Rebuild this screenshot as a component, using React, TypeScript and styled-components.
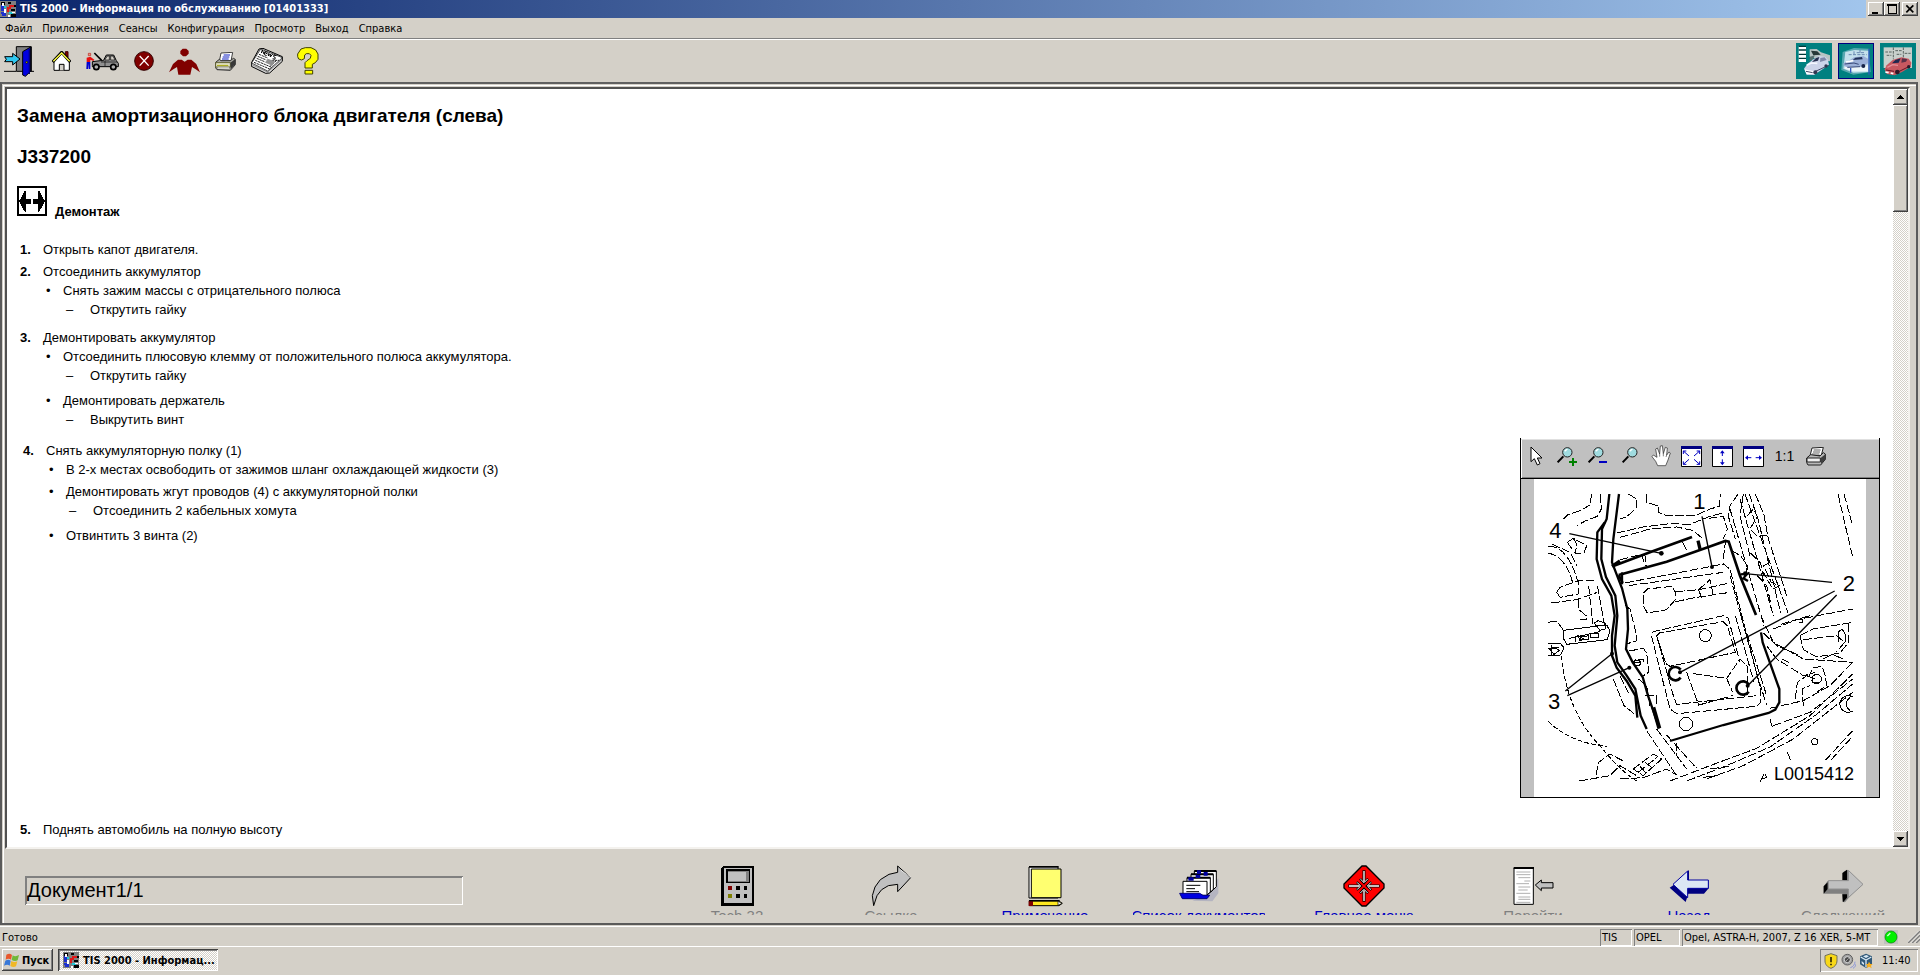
import React from "react";
import styled, { createGlobalStyle, css } from "styled-components";

const face = "#d4d0c8";
const uiFont = `"DejaVu Sans Condensed", "DejaVu Sans", sans-serif`;
const docFont = `"Liberation Sans", Arial, sans-serif`;

const raised = css`
  box-shadow: inset -1px -1px #404040, inset 1px 1px #ffffff, inset -2px -2px #808080;
`;
const sunken = css`
  box-shadow: inset 1px 1px #808080, inset -1px -1px #ffffff;
`;

const GlobalStyle = createGlobalStyle`
  * { box-sizing: border-box; }
  body { margin: 0; background: ${face}; color: #000; font-family: ${uiFont}; font-size: 11px; }
  button { font: inherit; color: inherit; background: none; border: 0; padding: 0; margin: 0; }
  ul, ol { list-style: none; margin: 0; padding: 0; }
  svg { display: block; flex: none; }
`;

const Shell = styled.div`
  display: flex;
  flex-direction: column;
  height: 100vh;
  overflow: hidden;
  background: ${face};
`;

/* ---------- title bar ---------- */
const TitleBar = styled.header`
  display: flex;
  align-items: center;
  height: 18px;
  flex: none;
  background: linear-gradient(90deg, #0a246a, #a6caf0);
`;
const Title = styled.h1`
  flex: 1;
  margin: 0 0 0 4px;
  font-size: 11px;
  line-height: 18px;
  color: #fff;
  white-space: nowrap;
`;
const WindowButtons = styled.div`
  display: flex;
  height: 18px;
  align-items: center;
  padding: 0 2px;
  background: ${face};
`;
const WindowButton = styled.button<{ $gap?: boolean }>`
  width: 16px;
  height: 14px;
  margin-left: ${(p) => (p.$gap ? 2 : 0)}px;
  background: ${face};
  ${raised}
`;

/* ---------- menu and toolbar ---------- */
const MenuBar = styled.nav`
  display: flex;
  height: 21px;
  flex: none;
  padding: 1px 0 0 5px;
  gap: 10px;
  border-bottom: 1px solid #808080;
`;
const MenuItem = styled.button`
  line-height: 19px;
`;
const ToolBar = styled.div`
  display: flex;
  align-items: center;
  height: 43px;
  flex: none;
  padding-right: 4px;
  border-top: 1px solid #fff;
`;
const ToolButton = styled.button`
  display: grid;
  place-items: center;
  width: 41px;
  height: 40px;
  &:first-child { justify-items: start; padding-left: 4px; }
`;
const Spacer = styled.div`
  flex: 1;
`;
const ModeButtons = styled.div`
  display: flex;
  gap: 6px;
`;
const ModeButton = styled.button<{ $active?: boolean }>`
  width: 36px;
  height: 36px;
  background: #008080;
  outline: ${(p) => (p.$active ? "1px solid #000080" : "none")};
  outline-offset: -1px;
`;

/* ---------- main frame ---------- */
const Frame = styled.main`
  display: flex;
  flex: 1;
  min-height: 0;
  margin-right: 2px;
  padding: 1px 0 0 1px;
  border: 2px solid #5a5a5a;
  border-top-color: #606060;
`;
const FrameInner = styled.div`
  display: flex;
  flex-direction: column;
  flex: 1;
  min-width: 0;
  border-top: 1px solid #fff;
  border-left: 1px solid #fff;
`;
const DocumentPane = styled.section`
  display: flex;
  flex: 1;
  min-height: 0;
  margin: 1px 6px 0 1px;
  border: 2px solid #505050;
  border-right: 2px solid #f4f2ee;
  border-bottom: 2px solid #f4f2ee;
  background: #fff;
`;
const Page = styled.article`
  flex: 1;
  min-width: 0;
  overflow: hidden;
  padding: 15px 13px 0 10px;
  font-family: ${docFont};
  font-size: 13px;
  line-height: 19px;
`;
const DocTitle = styled.h2`
  margin: 0 0 17px;
  font-size: 19px;
  line-height: 24px;
`;
const Section = styled.div`
  display: flex;
  align-items: flex-end;
  gap: 8px;
  margin: 1px 0 24px;
`;
const SectionTitle = styled.h3`
  margin: 0 0 -5px;
  font-size: 13px;
  line-height: 19px;
`;
const Steps = styled.ol`
  display: flex;
  flex-direction: column;
  gap: 3px;
`;
const Step = styled.li`
  display: grid;
  grid-template-columns: 23px 1fr;
  padding-left: 3px;
`;
const StepNumber = styled.b``;
const FigureStep = styled(Step)`
  grid-template-columns: 23px 1fr auto;
  padding: 3px 0 0 6px;
  margin-bottom: 19px;
`;
const StepBody = styled.div`
  min-width: 0;
`;
const Bullets = styled.ul`
  display: flex;
  flex-direction: column;
  gap: 3px;
  padding: 0 0 3px 3px;
`;
const Bullet = styled.li`
  display: grid;
  grid-template-columns: 17px 1fr;
`;
const Dashes = styled.ul`
  padding: 0 0 3px 3px;
`;
const Dash = styled.li`
  display: grid;
  grid-template-columns: 24px 1fr;
`;

/* ---------- figure ---------- */
const Figure = styled.figure`
  width: 360px;
  margin: -3px 0 0;
  border: 1px solid #000;
  border-top: 0;
`;
const FigureTools = styled.div`
  display: flex;
  height: 41px;
  padding: 1px 0 6px;
  background: #c0c0c0;
  border-bottom: 1px solid #000;
  box-shadow: inset 0 1px #fff, inset 0 2px #e0e0e0, inset 1px 0 #fff, inset 0 -1px #808080;
`;
const FigureTool = styled.button`
  display: grid;
  place-items: center;
  width: 31px;
  height: 34px;
  font-size: 14px;
`;
const FigureCanvas = styled.div`
  display: flex;
  justify-content: center;
  background: #c0c0c0;
  svg { background: #fff; }
`;

/* ---------- scroll bar ---------- */
const ScrollBar = styled.div`
  display: flex;
  flex-direction: column;
  width: 15px;
  background: repeating-conic-gradient(#ffffff 0 25%, ${face} 0 50%) 0 0 / 2px 2px;
`;
const ScrollButton = styled.button`
  display: grid;
  place-items: center;
  height: 16px;
  background: ${face};
  ${raised}
`;
const ScrollThumb = styled.div`
  height: 107px;
  background: ${face};
  ${raised}
`;

/* ---------- bottom navigation ---------- */
const NavBar = styled.div`
  display: flex;
  height: 74px;
  flex: none;
  padding: 16px 7px 0 21px;
`;
const Counter = styled.output`
  width: 438px;
  height: 29px;
  margin-top: 11px;
  padding-left: 2px;
  font-family: ${docFont};
  font-size: 20px;
  line-height: 28px;
  box-shadow: inset 1px 1px #808080, inset -1px -1px #fff, inset 2px 2px #808080;
`;
const NavButtons = styled.div`
  display: flex;
  gap: 22px;
`;
const NavButton = styled.button<{ $disabled?: boolean; $lead?: number }>`
  display: flex;
  flex-direction: column;
  align-items: center;
  width: 132px;
  height: 50px;
  margin-left: ${(p) => p.$lead ?? 0}px;
  overflow: hidden;
  font-family: ${docFont};
  font-size: 15px;
  line-height: 17px;
  white-space: nowrap;
  color: ${(p) => (p.$disabled ? "#808080" : "#0000c0")};
`;
const NavIcon = styled.span`
  display: grid;
  place-items: center;
  height: 42px;
  flex: none;
`;

/* ---------- status bar and task bar ---------- */
const StatusBar = styled.footer`
  display: flex;
  align-items: center;
  height: 20px;
  flex: none;
  margin-top: 1px;
  gap: 2px;
  padding: 1px 0 0 2px;
  border-top: 1px solid #fff;
`;
const StatusCell = styled.span<{ $width: number }>`
  width: ${(p) => p.$width}px;
  height: 17px;
  padding-left: 2px;
  line-height: 17px;
  white-space: nowrap;
  ${sunken}
`;
const StatusText = styled.span`
  flex: 1;
`;
const StatusLed = styled.span`
  display: flex;
  align-items: center;
  justify-content: space-between;
  width: 40px;
  height: 18px;
  padding-left: 4px;
`;
const TaskBar = styled.div`
  display: flex;
  height: 29px;
  flex: none;
  padding: 2px 2px 3px;
  border-top: 1px solid #fff;
`;
const StartButton = styled.button`
  display: flex;
  align-items: center;
  gap: 2px;
  width: 51px;
  height: 22px;
  padding-left: 2px;
  font-weight: bold;
  ${raised}
`;
const TaskButton = styled.button`
  display: flex;
  align-items: center;
  gap: 4px;
  width: 160px;
  height: 22px;
  margin-left: 5px;
  padding-left: 5px;
  font-weight: bold;
  white-space: nowrap;
  background: repeating-conic-gradient(#ffffff 0 25%, ${face} 0 50%) 0 0 / 2px 2px;
  box-shadow: inset 1px 1px #404040, inset -1px -1px #fff, inset 2px 2px #808080;
`;
const Tray = styled.div`
  display: flex;
  align-items: center;
  gap: 3px;
  width: 98px;
  height: 23px;
  padding-left: 4px;
  ${sunken}
`;
const Clock = styled.time`
  margin-left: 6px;
`;

/* ---------- drawings ---------- */
/* Every drawing uses three units per pixel, so a 3-unit stroke is one pixel wide. */
type ArtProps = { box: string; children: React.ReactNode; crisp?: boolean };
const Art = ({ box, children, crisp }: ArtProps) => {
  const [, , w, h] = box.split(" ").map(Number);
  return (
    <svg
      width={w / 3}
      height={h / 3}
      viewBox={box}
      fill="none"
      strokeWidth={3}
      shapeRendering={crisp ? "crispEdges" : undefined}
      aria-hidden="true"
    >
      {children}
    </svg>
  );
};

const AppIcon = () => (
  <Art box="0 0 48 48" crisp>
    <path d="M0 0H48V48H0Z" fill="#808080" />
    <path d="M3 3H15V12H3ZM24 3H33V9H24ZM36 12H48V18H36Z" fill="#000" />
    <path d="M3 12H12V30H3ZM3 33H18V45H6Z" fill="#1c2fd0" />
    <path d="M6 6H12V15H6ZM12 24H18V36H12Z" fill="#fff" />
    <path d="M21 18H27V12H42V18H33V24H27V33H21Z" fill="#e01818" />
    <path d="M12 15H18V21H12ZM27 33H39V39H27Z" fill="#20c8d8" />
    <path d="M33 24H45V30H33ZM33 39H48V48H33Z" fill="#000" />
    <path d="M36 33H45V36H36ZM24 42H30V48H24Z" fill="#fff" />
  </Art>
);

const ExitIcon = () => (
  <Art box="12 138 90 93">
    <path d="M12 214H48M84 214H102" stroke="#000" />
    <path d="M49 214V140H94V214Z" fill="#808080" stroke="#000" />
    <path d="M68 155L92 141V214L76 229L68 225Z" fill="#0000e0" stroke="#000" />
    <path d="M88 146V222" stroke="#000080" strokeWidth="4" />
    <circle cx="80" cy="187" r="3" fill="#c0c000" stroke="#000" strokeWidth="2" />
    <path d="M14 170H38V160L60 177L38 195V185H14L19 178Z" fill="#30c8f0" stroke="#000" />
  </Art>
);
const HomeIcon = () => (
  <Art box="159 150 57 60">
    <path d="M199 152H207V170L199 164Z" fill="#800000" stroke="#400000" />
    <path d="M165 182L188 158L211 182V208H165Z" fill="#fff" stroke="#000" />
    <path d="M161 183L188 154L214 183" stroke="#000" strokeWidth="9" />
    <path d="M163 181L188 156L212 181" stroke="#ffff40" strokeWidth="4" />
    <path d="M181 208V190H195V208" fill="#d4d0c8" stroke="#000" />
  </Art>
);
const GarageIcon = () => (
  <Art box="257 150 99 57">
    <path d="M264 154h7v7h-7z" fill="#e0a080" stroke="#c02020" strokeWidth="2" />
    <path d="M259 167L270 164L282 173L279 177L270 173V180H259Z" fill="#e81010" />
    <path d="M259 180H270V201H265V185L263 201H258Z" fill="#0000d0" />
    <path d="M276 190V179L300 176H309L318 159H340L348 176L354 184V194H276Z" fill="#909090" stroke="#000" />
    <path d="M282 153L304 175" stroke="#000" strokeWidth="5" />
    <path d="M313 174L321 162H327V174ZM331 162H338L344 174H331Z" fill="#d4d0c8" stroke="#000" strokeWidth="2" />
    <path d="M302 180H350M314 176V192" stroke="#000" strokeWidth="2" />
    <circle cx="288" cy="195" r="8" fill="#b0b0b0" stroke="#000" strokeWidth="5" />
    <circle cx="339" cy="195" r="8" fill="#b0b0b0" stroke="#000" strokeWidth="5" />
  </Art>
);
const CancelIcon = () => (
  <Art box="402 153 60 60">
    <circle cx="432" cy="183" r="28" fill="#800000" stroke="#300000" />
    <path d="M419 168L446 197M446 168L419 197" stroke="#fff" strokeWidth="4" />
  </Art>
);
const PersonIcon = () => (
  <Art box="504 142 93 81">
    <path d="M545 144H556L563 151V159L555 167H546L538 159V151Z" fill="#800000" />
    <path d="M504 215L516 190L531 177H542L551 183L560 177H571L586 190L597 215L584 206L573 199L568 222H532L528 199L517 206Z" fill="#800000" />
  </Art>
);
const PrinterIcon = () => (
  <Art box="642 152 63 57">
    <path d="M660 155L695 153L690 179L655 180Z" fill="#fff" stroke="#404040" />
    <path d="M668 161H687M665 167H685M663 173H683" stroke="#1020c0" />
    <path d="M644 183L655 174L660 178H688L697 171L703 174V190L688 207L648 205L643 198Z" fill="#a8a8a0" stroke="#303030" />
    <path d="M644 184H688V197H644Z" fill="#e8e8d0" stroke="#606030" />
    <path d="M688 184L702 174V189L689 204Z" fill="#383838" />
    <path d="M648 192H682" stroke="#a0a000" />
    <path d="M650 200H684" stroke="#fff" />
  </Art>
);
const NewsIcon = () => (
  <Art box="750 144 96 78">
    <path d="M751 189L774 147L786 145L844 170V184L806 219L794 220L751 199Z" fill="#d8d8d8" stroke="#000" />
    <path d="M752 189L779 147L844 173L800 213Z" fill="#fff" stroke="#000" strokeWidth="2" />
    <path d="M784 150l-3 9M784 150l5 12l4-9M800 157l-6-2l-4 9l7 3M795 160l5 2M804 158l-2 10l6-6l0 9l7-9M826 167l-7-2l-1 5l5 3l-2 5l-6-2" stroke="#000" strokeWidth="3" />
    <path d="M774 163L800 174M770 169L796 180M767 175L793 186M763 181L812 202M759 187L806 207M812 181L834 181M808 198L826 182" stroke="#202020" strokeWidth="3" strokeDasharray="7 2" />
    <path d="M800 176L822 184L814 197L793 188Z" fill="#909090" />
    <path d="M753 194L800 216L843 178" stroke="#606060" strokeWidth="2" />
  </Art>
);
const HelpIcon = () => (
  <Art box="888 143 66 84">
    <path d="M890 172V164L900 149L913 145H930L944 152L951 164V180L943 190L934 195V206H912V190L918 184L928 177L930 168L925 163H916L911 167L910 178L902 182L893 179Z" fill="#ffff00" stroke="#404000" />
    <path d="M912 213H935V224H912Z" fill="#ffff00" stroke="#404000" />
  </Art>
);

const CatalogArt = () => (
  <Art box="888 129 108 108">
    <path d="M896 139H918V186H896Z" fill="#fff" />
    <path d="M896 139H918M896 150H918M896 163H918M896 175H918" stroke="#003838" strokeWidth="4" />
    <path d="M929 148L950 147L963 157L990 166V184L962 180L929 170Z" fill="#b8c4c4" />
    <path d="M933 152L952 154L962 164L940 166Z" fill="#283838" />
    <path d="M930 170L944 166L940 178L928 184Z" fill="#587070" />
    <path d="M912 206L922 192L940 178L958 168L976 170L984 179L987 194L970 206L942 225L920 224Z" fill="#cdd4ea" />
    <path d="M936 186L948 174L958 171L954 182Z" fill="#283050" />
    <path d="M961 174L974 172L980 180L960 186Z" fill="#8088a8" />
    <path d="M920 196L934 189L952 190" stroke="#f4f6ff" strokeWidth="5" />
    <path d="M914 208L926 211L940 213V222L920 223Z" fill="#fff" />
    <path d="M918 214L938 218M942 216L986 196" stroke="#404868" strokeWidth="3" />
    <circle cx="946" cy="217" r="6" fill="#303850" />
    <circle cx="978" cy="198" r="5" fill="#303850" />
  </Art>
);
const WorkshopArt = () => (
  <Art box="1014 129 108 108">
    <path d="M1028 156L1062 144L1106 146L1112 216L1060 224L1024 210Z" fill="#58a8b0" />
    <path d="M1036 156L1064 150L1106 152V216L1060 218L1030 206Z" fill="#c4e0ec" />
    <path d="M1036 196H1104V214H1060L1034 206Z" fill="#eef6fa" />
    <path d="M1030 190L1046 182L1062 172L1090 168L1104 176V190L1088 200L1042 202L1032 198Z" fill="#9cb0d8" />
    <path d="M1058 180L1066 173L1086 171L1088 178Z" fill="#203058" />
    <path d="M1034 192L1062 189L1076 193M1042 202L1080 200" stroke="#384878" strokeWidth="3" />
    <path d="M1038 186L1060 182" stroke="#fff" strokeWidth="5" />
    <circle cx="1090" cy="198" r="6" fill="#182448" />
    <path d="M1107 146V224M1052 204V218" stroke="#3058c0" strokeWidth="4" />
    <path d="M1046 164H1100M1062 154V166M1080 150V164M1070 158H1096" stroke="#6888b0" strokeDasharray="9 4" />
    <path d="M1015.500 130.500H1120.500V235.500H1015.500Z" stroke="#000080" />
  </Art>
);
const RepairArt = () => (
  <Art box="1140 129 108 108">
    <path d="M1151 142H1236V204H1151Z" fill="#c8d0cc" />
    <path d="M1180 142V178M1210 142V174M1156 156H1176M1186 152H1206M1214 160H1232M1160 166H1174M1190 163H1204" stroke="#586460" strokeDasharray="8 3" />
    <path d="M1154 208L1160 196L1178 180L1204 172L1226 176L1234 188L1232 200L1206 216L1184 226L1160 222Z" fill="#c85860" />
    <path d="M1176 190L1186 180L1202 175L1196 188Z" fill="#202850" />
    <path d="M1206 175L1222 178L1218 185L1204 188Z" fill="#583048" />
    <path d="M1162 202L1178 194L1194 196" stroke="#e89098" strokeWidth="4" />
    <path d="M1158 210L1182 214M1190 218L1230 198" stroke="#601828" strokeWidth="3" />
    <path d="M1156 216L1166 218M1172 219L1180 221" stroke="#fff" strokeWidth="5" />
    <circle cx="1192" cy="216" r="7" fill="#301828" />
    <circle cx="1226" cy="200" r="5" fill="#301828" />
  </Art>
);

const RemoveIcon = () => (
  <Art box="51 558 90 90" crisp>
    <path d="M54 561H138V645H54Z" fill="#fff" stroke="#000" strokeWidth="6" />
    <path d="M57 604L74 573H78V597H93V611H78V635H74ZM135 604L118 573H114V597H99V611H114V635H118Z" fill="#000" />
  </Art>
);

/* Figure tool icons */
const PointerIcon = () => (
  <Art box="60 48 39 60">
    <path d="M63 51V95L73 86L82 105L90 101L82 84H96Z" fill="#fff" stroke="#000" />
  </Art>
);
const Lens = ({ x }: { x: number }) => (
  <g>
    <path d={`M${x} 103L${x + 17} 85`} stroke="#000" strokeWidth="6" />
    <circle cx={x + 29} cy="73" r="14" fill="#a0dce0" stroke="#202020" />
    <path d={`M${x + 21} 70L${x + 29} 63`} stroke="#fff" strokeWidth="4" />
  </g>
);
const ZoomInIcon = () => (
  <Art box="147 54 63 63">
    <Lens x={149} />
    <path d="M183 102H207M195 90V114" stroke="#008000" strokeWidth="6" />
  </Art>
);
const ZoomOutIcon = () => (
  <Art box="243 54 63 63">
    <Lens x={245} />
    <path d="M276 102H300" stroke="#0000c0" strokeWidth="6" />
  </Art>
);
const ZoomIcon = () => (
  <Art box="342 54 51 63">
    <Lens x={347} />
  </Art>
);
const HandIcon = () => (
  <Art box="426 45 60 66">
    <path d="M446 107L440 94L429 80L433 75L444 82L440 57L445 54L452 72L454 48L460 47L463 71L469 52L475 54L473 75L480 66L484 69L477 90L470 107Z" fill="#fff" stroke="#202020" strokeWidth="2" />
    <path d="M452 72V80M463 71V79M473 75L471 81" stroke="#404040" strokeWidth="2" />
  </Art>
);
const FitFrame = ({ children }: { children: React.ReactNode }) => (
  <Art box="0 0 63 63">
    <path d="M1.500 1.500H61.500V61.500H1.500Z" fill="#fff" stroke="#000" />
    <path d="M0 0H63V9H0Z" fill="#000080" />
    {children}
  </Art>
);
const FitPageIcon = () => (
  <FitFrame>
    <path d="M7 24V15H16M47 15H56V24M7 46V55H16M47 55H56V46M7 15L24 30M56 15L39 30M7 55L24 40M56 55L39 40" stroke="#0000c0" />
  </FitFrame>
);
const FitHeightIcon = () => (
  <FitFrame>
    <path d="M31 17V30M31 40V53" stroke="#0000c0" />
    <path d="M31 13L38 22H24ZM31 58L38 49H24Z" fill="#0000c0" />
  </FitFrame>
);
const FitWidthIcon = () => (
  <FitFrame>
    <path d="M12 35H25M38 35H51" stroke="#0000c0" />
    <path d="M6 35L15 28V42ZM57 35L48 28V42Z" fill="#0000c0" />
  </FitFrame>
);
const FigurePrinterIcon = () => (
  <Art box="888 51 60 57">
    <path d="M906 54L940 52L934 76L900 78Z" fill="#fff" stroke="#202020" />
    <path d="M911 60H932M909 66H930M906 72H928" stroke="#606060" />
    <path d="M890 84L902 74L930 78L940 68L946 72V88L932 105H894L890 98Z" fill="#b8b8b8" stroke="#202020" />
    <path d="M891 84H931V96H891Z" fill="#f0f0f0" stroke="#202020" />
    <path d="M932 84L946 73V88L933 102Z" fill="#404040" />
  </Art>
);

/* Line drawing of the battery tray */
const TrayDrawing = () => (
  <svg width="332" height="318" viewBox="72 150 996 954" fill="none" stroke="#000" strokeWidth="3" role="img" aria-label="L0015412">
    <g strokeDasharray="26 7" shapeRendering="crispEdges">
      <path d="M245 195L240 228L208 246L172 258L158 272M270 195L274 240L262 262L226 276L200 290" />
      <path d="M355 195L380 210V235L352 262L330 270M410 195V220L446 232V250L470 260L560 258L600 240L628 232L632 195" />
      <path d="M330 325L420 300L500 294L548 304L580 330M320 312L400 294L480 284L540 286L600 262L640 252" />
      <path d="M596 268L640 262L652 300L640 330M684 195L660 230L655 262L676 330M700 195L690 260L720 380" />
      <path d="M705 195L834 552M718 195L744 270L812 552M736 195L762 258L775 330L830 500M690 210L790 560M660 240L762 590" />
      <path d="M984 195L1027 380M1002 195L1028 290" />
      <path d="M712 260L730 240L742 262L720 300L742 322L770 318M780 400L760 410L784 460L808 470L788 480L760 430" />
      <path d="M664 365L692 380L712 410L708 440M722 372L752 402L760 440M742 440L770 470L782 520" />
      <path d="M115 352C150 350 182 380 204 460M115 372C150 380 176 410 188 462M125 345L180 370L200 410" />
      <path d="M172 340L190 328L230 350L222 372L196 374ZM190 328L200 345L196 374M140 490L150 475L204 455L262 455M140 490L150 505L204 495V455M124 522L200 512L262 490" />
      <path d="M205 512V540L228 560V570H210M236 470L248 585M262 470L284 590M115 580L140 576L158 600L162 625" />
      <path d="M160 604L290 588L300 606L292 632L170 646L160 628ZM178 628L270 608M196 620V638M212 624L236 620V632L212 632Z" strokeDasharray="none" />
      <path d="M115 642H150L162 656L152 678L115 680M115 660L146 656M124 648V680" strokeDasharray="none" />
      <path d="M155 680C160 760 190 870 270 950C310 1000 340 1030 380 1056M115 878C160 920 220 946 290 952" strokeDasharray="14 7" />
      <path d="M345 462L640 405L660 420L752 780V820L740 832L500 854L480 840L424 620L430 608L640 560L655 568L690 700" />
      <path d="M330 392L394 376M394 376L406 412M404 374L410 410M518 340L534 370M356 470L640 430" />
      <path d="M400 492L412 480L486 472L498 492L496 512L470 542L412 552L400 530ZM498 488L566 482L650 464M496 518L560 505L660 490M566 482L600 452L610 500M566 482L576 510" />
      <path d="M440 620L448 612L640 578L652 590L676 670L480 712L468 704ZM440 620L490 800L500 826L740 800M530 730L566 828L600 820M550 734L650 748L690 690L712 712V800M650 748L668 790M566 828L668 800" />
      <path d="M640 390L646 340M660 440L742 740L770 828M676 560L732 760M690 550L770 800" />
      <path d="M346 530L360 540L380 620L378 636L352 644M358 666L400 658L410 672L416 730L400 740M368 700H400V690H378Z" />
      <path d="M310 750L342 830L380 860M330 740L360 800M386 750L410 770L420 830M406 800H440V830" />
      <path d="M752 560L790 640L880 690L1028 700M760 612L800 650L870 680M770 650L800 690L880 740L915 730" />
      <path d="M790 600L860 572L1028 540M870 620L910 600L1028 580M812 586L900 560M870 620L880 662L920 684L990 672L1016 640V580M880 632L980 620L1004 640L980 668" />
      <path d="M984 640V610L996 600L1006 616V640M940 690L966 676L1000 690M816 690L836 700M860 570H876V580H866" strokeDasharray="none" />
      <path d="M856 810L862 760L890 740L915 750M880 830L876 780L900 770M920 790L950 770L946 740L936 712L910 716L898 740L910 762L934 760" />
      <path d="M780 838L880 815L960 770L1028 700M790 890L900 850L1028 750M480 1056L600 1010L740 958L900 860L1028 735M530 1056L640 1014L780 954L920 856L1028 765M590 1050L700 1010L850 930L1028 790" />
      <path d="M208 1056L300 1040L330 1010L380 1040M258 1038L266 1000L300 975L340 996M330 1050L400 1046L470 1020L500 1038" />
      <path d="M370 1020L430 975L455 990L400 1040ZM384 1030L440 986M390 1012L410 1034M406 1000L430 1020" />
      <path d="M440 900L530 1020M470 918L560 1018M498 940L500 980M410 905L500 1040M780 870L786 892L800 886" />
      <path d="M946 994L1028 905M962 994L1028 922M832 970L842 994M750 1058L764 1032L770 1045L756 1050" />
      <path d="M580 1045L620 1040M600 1020L660 1012" />
    </g>
    <g shapeRendering="crispEdges">
      <circle cx="586" cy="620" r="18" />
      <circle cx="528" cy="885" r="20" />
      <circle cx="382" cy="702" r="9" />
      <circle cx="914" cy="938" r="9" />
      <circle cx="920" cy="750" r="14" />
      <path d="M1028 804A25 25 0 1 0 1028 846M1020 806A22 22 0 0 0 1020 844" />
      <path d="M252 582L264 575L286 582V600L270 604ZM262 590H284M204 620L222 630L210 636ZM240 612H266V626H240ZM120 662L132 654L148 664L132 676Z" />
    </g>
    {/* hoses and tray outline */}
    <g strokeWidth="7">
      <path d="M298 195L290 270L276 300L274 390L288 444L316 500L322 560L314 650L322 700L350 740L376 780L392 860L410 900" />
      <path d="M327 195L310 330L306 400L336 478L352 540L354 600L348 660L368 700L398 744L414 800L448 898" />
      <path d="M284 280L262 310L260 390L276 450L304 500L314 560L306 620V680L320 716L350 756L376 800L382 866" />
      <path d="M430 835L448 898" strokeWidth="12" />
      <path d="M312 410L430 366L546 324M326 438L470 398L606 350L646 336L656 338L690 440L738 558M326 438L338 462" strokeWidth="8" />
      <path d="M306 412L330 396M564 335L570 360" strokeWidth="10" />
      <path d="M692 436L712 434L700 448L714 456" />
      <path d="M753 610L758 640L808 780V820L796 842L776 852L640 888L480 936" />
      <path d="M336 430V466" />
    </g>
    <g strokeWidth="8">
      <path d="M512 746A20 20 0 1 1 512 722" />
      <path d="M716 788A20 20 0 1 1 716 766" />
    </g>
    {/* leader lines */}
    <g strokeWidth="4">
      <path d="M178 314L454 373M576 262L606 414M966 460L706 434M974 486L510 730M980 498L713 770M166 786L306 674M172 800L358 716" />
    </g>
    <g fill="#000" stroke="none">
      <circle cx="454" cy="373" r="7" />
      <circle cx="606" cy="414" r="6" />
      <circle cx="706" cy="434" r="7" />
      <circle cx="510" cy="730" r="6" />
      <circle cx="713" cy="770" r="6" />
      <circle cx="306" cy="674" r="6" />
      <circle cx="358" cy="716" r="6" />
    </g>
    <g fill="#000" stroke="none" fontFamily="Liberation Sans, Arial, sans-serif" fontSize="66">
      <text x="550" y="240">1</text>
      <text x="998" y="486">2</text>
      <text x="114" y="841">3</text>
      <text x="118" y="328">4</text>
      <text x="1032" y="1052" fontSize="54" textAnchor="end">L0015412</text>
    </g>
  </svg>
);

/* Bottom navigation icons */
const TesterIcon = () => (
  <Art box="0 0 99 120" crisp>
    <path d="M0 6L6 0H99V120H0Z" fill="#000" />
    <path d="M9 6H93V111H9Z" fill="#c0c0c0" />
    <path d="M15 9H87V51H15Z" fill="#000" />
    <path d="M21 15H84V48H21Z" fill="#808080" />
    <path d="M21 18H75V45H21Z" fill="#c0c0c0" />
    <path d="M21 60H33V72H21Z" fill="#800000" />
    <path d="M21 84H33V96H21Z" fill="#808000" />
    <path d="M45 60H57V72H45ZM69 60H78V72H69ZM45 84H57V96H45ZM69 84H78V96H69Z" fill="#000" />
  </Art>
);
const JumpIcon = () => (
  <Art box="0 0 123 126">
    <path d="M4 92L8 122L18 92L32 74L52 62L80 58V80L119 38L80 3V22L54 28L28 44L12 66Z" fill="#c0c0c0" stroke="#000" />
    <path d="M90 16L121 38" stroke="#fff" strokeWidth="2" />
  </Art>
);
const NoteIcon = () => (
  <Art box="0 0 105 123">
    <path d="M3 3H90V96H3Z" fill="#fff" stroke="#000" />
    <path d="M3 2H92" stroke="#000" strokeWidth="5" />
    <path d="M10 9H99V95H10Z" fill="#ffff70" stroke="#000" />
    <path d="M4 105H93L103 112L93 119H4Z" fill="#ffe820" stroke="#000" />
    <path d="M2 104H15V120H2Z" fill="#800000" />
    <path d="M3 104H95" stroke="#000" strokeWidth="4" />
    <path d="M90 106L102 112L90 118Z" fill="#fff" stroke="#000" strokeWidth="2" />
  </Art>
);
const CardsIcon = () => (
  <Art box="0 0 123 96">
    <path d="M40 92L100 94L118 70V24L84 76Z" fill="#b4b4c0" />
    <path d="M46 3H112V50L96 66H46Z" fill="#fff" stroke="#000" />
    <path d="M36 13H103V58L88 72H36Z" fill="#fff" stroke="#000" />
    <path d="M24 23H94V66L80 78H24Z" fill="#fff" stroke="#000" />
    <path d="M46 3H112M36 13H103M24 23H94" stroke="#000" strokeWidth="6" />
    <path d="M54 1H66V12H54ZM50 14H64V24H50ZM74 6H86V17H74ZM28 22H44V32H28Z" fill="#0000a0" />
    <path d="M12 34H84V76H12Z" fill="#fff" stroke="#000" />
    <path d="M22 46H64M22 56H48M22 65H60" stroke="#000" />
    <path d="M2 70H62L72 76H92L84 86H10Z" fill="#0000e0" stroke="#000080" />
  </Art>
);
const MainMenuIcon = () => (
  <Art box="0 0 126 126">
    <path d="M57 3H69L123 57V69L69 123H57L3 69V57Z" fill="#ff0000" stroke="#000" strokeWidth="4" />
    <path d="M63 16V46M63 110V80M16 63H46M110 63H80" stroke="#000" strokeWidth="9" />
    <path d="M51 41L63 54L75 41M51 85L63 72L75 85M41 51L54 63L41 75M85 51L72 63L85 75" stroke="#000" strokeWidth="7" />
    <path d="M63 18V50M63 108V76M18 63H50M108 63H76" stroke="#fff" strokeWidth="4" />
    <path d="M52 42L63 53L74 42M52 84L63 73L74 84M42 52L53 63L42 74M84 52L73 63L84 74" stroke="#fff" strokeWidth="3" />
  </Art>
);
const GotoIcon = () => (
  <Art box="0 0 123 117">
    <path d="M3 3H61V112H3Z" fill="#fff" stroke="#000" />
    <path d="M2 3H63" stroke="#000" strokeWidth="6" />
    <path d="M10 15H52M10 23H52M16 32H52M34 42H52M10 50H48M16 60H52M16 69H44M10 79H52M16 90H52M16 97H52M10 106H52" stroke="#b0b0b0" />
    <path d="M67 54L85 39V47H120V63H85V71Z" fill="#c0c0c0" stroke="#000" />
  </Art>
);
const BackIcon = () => (
  <Art box="0 0 123 102">
    <path d="M2 56L14 48L60 3V34H119V58L105 74H58L50 99Z" fill="#000080" />
    <path d="M12 46L56 6V33H118V58H56V86Z" fill="#dce6f4" stroke="#0000a0" />
  </Art>
);
const NextIcon = () => (
  <Art box="0 0 123 102">
    <path d="M2 52L14 36H62V8L74 2L108 50L66 100L58 98V74H2Z" fill="#808080" />
    <path d="M2 52L14 40V60L2 74ZM58 12L72 2V34H58ZM58 76H72V86L60 100Z" fill="#000" />
    <path d="M16 35H76V4L120 46L76 86V60H16Z" fill="#c0c0c0" stroke="#909090" />
  </Art>
);

const StartFlag = () => (
  <Art box="12 456 48 45">
    <path d="M19 461C26 457 31 457 36 462L33 476C28 472 22 473 17 476Z" fill="#e8582c" />
    <path d="M38 463C44 467 50 466 57 462L53 478C47 481 41 480 35 477Z" fill="#70b838" />
    <path d="M16 479C22 475 28 475 32 479L29 494C24 490 18 491 12 494Z" fill="#3878d8" />
    <path d="M34 480C40 484 46 484 52 481L48 496C42 499 36 498 31 495Z" fill="#f0b828" />
  </Art>
);
const ShieldIcon = () => (
  <Art box="0 0 42 48">
    <path d="M21 2L39 8V24C39 34 32 42 21 46C10 42 3 34 3 24V8Z" fill="#f8d818" stroke="#70705c" />
    <path d="M21 12V28M21 32V37" stroke="#302800" strokeWidth="5" />
  </Art>
);
const SpeakerIcon = () => (
  <Art box="0 0 45 48">
    <circle cx="19" cy="20" r="16" fill="#a0a0a0" stroke="#606060" />
    <circle cx="19" cy="20" r="9" fill="#484848" stroke="#d8d8d8" />
    <path d="M15 24L23 16" stroke="#a0a0a0" />
    <path d="M28 44C36 42 42 34 42 26M36 46C42 43 44 38 44 34" stroke="#6878e0" strokeWidth="2" />
  </Art>
);
const CubeIcon = () => (
  <Art box="0 0 42 48">
    <path d="M21 2L39 10V34L21 45L3 34V10Z" fill="#305878" />
    <path d="M5 12L21 21L37 12M21 21V43" stroke="#d8e8f4" strokeWidth="4" />
    <path d="M12 10L22 6L30 10L21 15ZM8 24L15 30V36L8 31Z" fill="#d8e8f4" />
    <path d="M30 26L34 33H41L36 38L38 46L30 41L23 46L25 38L20 33H27Z" fill="#f8b020" />
  </Art>
);
const LedIcon = () => (
  <Art box="0 0 42 42">
    <path d="M0 0H42V42H0Z" fill="#c0c0c0" />
    <circle cx="21" cy="21" r="18" fill="#00f000" stroke="#008000" strokeWidth="2" />
    <path d="M10 18L19 9" stroke="#d0ffd0" strokeWidth="4" />
  </Art>
);
const GripIcon = () => (
  <Art box="0 0 36 36">
    <path d="M0 36L36 0M12 36L36 12M24 36L36 24" stroke="#808080" strokeWidth="5" />
    <path d="M-4 36L36 -4M8 36L36 8M20 36L36 20" stroke="#fff" strokeWidth="2" />
  </Art>
);

/* ---------- content ---------- */
const menus = ["Файл", "Приложения", "Сеансы", "Конфигурация", "Просмотр", "Выход", "Справка"];

const tools = [
  { name: "Выход", icon: <ExitIcon /> },
  { name: "Домой", icon: <HomeIcon /> },
  { name: "Автомобиль", icon: <GarageIcon /> },
  { name: "Отмена", icon: <CancelIcon /> },
  { name: "Клиент", icon: <PersonIcon /> },
  { name: "Печать", icon: <PrinterIcon /> },
  { name: "Новости", icon: <NewsIcon /> },
  { name: "Справка", icon: <HelpIcon /> },
];

const figureTools = [
  { name: "Указатель", icon: <PointerIcon /> },
  { name: "Увеличить", icon: <ZoomInIcon /> },
  { name: "Уменьшить", icon: <ZoomOutIcon /> },
  { name: "Масштаб", icon: <ZoomIcon /> },
  { name: "Переместить", icon: <HandIcon /> },
  { name: "По размеру окна", icon: <FitPageIcon /> },
  { name: "По высоте", icon: <FitHeightIcon /> },
  { name: "По ширине", icon: <FitWidthIcon /> },
  { name: "1:1", icon: "1:1" },
  { name: "Печать рисунка", icon: <FigurePrinterIcon /> },
];

const navigation = [
  { label: "Tech 32", icon: <TesterIcon />, disabled: true },
  { label: "Ссылка", icon: <JumpIcon />, disabled: true },
  { label: "Примечание", icon: <NoteIcon /> },
  { label: "Список документов", icon: <CardsIcon /> },
  { label: "Главное меню", icon: <MainMenuIcon />, lead: 11 },
  { label: "Перейти", icon: <GotoIcon />, disabled: true, lead: 15 },
  { label: "Назад", icon: <BackIcon />, lead: 2 },
  { label: "Следующий", icon: <NextIcon />, disabled: true },
];

type BulletData = { text: string; dashes?: string[] };
const BulletList = ({ items }: { items: BulletData[] }) => (
  <Bullets>
    {items.map((item) => (
      <Bullet key={item.text}>
        <span>•</span>
        <div>
          {item.text}
          {item.dashes && (
            <Dashes>
              {item.dashes.map((dash) => (
                <Dash key={dash}>
                  <span>–</span>
                  <span>{dash}</span>
                </Dash>
              ))}
            </Dashes>
          )}
        </div>
      </Bullet>
    ))}
  </Bullets>
);

export default function App() {
  return (
    <Shell>
      <GlobalStyle />
      <TitleBar>
        <AppIcon />
        <Title>TIS 2000 - Информация по обслуживанию [01401333]</Title>
        <WindowButtons>
          <WindowButton aria-label="Свернуть">
            <Art box="0 0 48 42" crisp><path d="M12 30H30V36H12Z" fill="#000" /></Art>
          </WindowButton>
          <WindowButton aria-label="Развернуть">
            <Art box="0 0 48 42" crisp>
              <path d="M12 9H36V33H12Z" stroke="#000" />
              <path d="M10 10H38" stroke="#000" strokeWidth="6" />
            </Art>
          </WindowButton>
          <WindowButton $gap aria-label="Закрыть">
            <Art box="0 0 48 42"><path d="M13 10L34 31M34 10L13 31" stroke="#000" strokeWidth="5" /></Art>
          </WindowButton>
        </WindowButtons>
      </TitleBar>

      <MenuBar>
        {menus.map((menu) => (
          <MenuItem key={menu}>{menu}</MenuItem>
        ))}
      </MenuBar>

      <ToolBar>
        {tools.map((tool) => (
          <ToolButton key={tool.name} aria-label={tool.name}>{tool.icon}</ToolButton>
        ))}
        <Spacer />
        <ModeButtons>
          <ModeButton aria-label="Каталог"><CatalogArt /></ModeButton>
          <ModeButton $active aria-label="Обслуживание"><WorkshopArt /></ModeButton>
          <ModeButton aria-label="Ремонт"><RepairArt /></ModeButton>
        </ModeButtons>
      </ToolBar>

      <Frame>
        <FrameInner>
          <DocumentPane>
            <Page>
              <DocTitle>Замена амортизационного блока двигателя (слева)</DocTitle>
              <DocTitle>J337200</DocTitle>
              <Section>
                <RemoveIcon />
                <SectionTitle>Демонтаж</SectionTitle>
              </Section>
              <Steps>
                <Step>
                  <StepNumber>1.</StepNumber>
                  <StepBody>Открыть капот двигателя.</StepBody>
                </Step>
                <Step>
                  <StepNumber>2.</StepNumber>
                  <StepBody>
                    Отсоединить аккумулятор
                    <BulletList items={[{ text: "Снять зажим массы с отрицательного полюса", dashes: ["Открутить гайку"] }]} />
                  </StepBody>
                </Step>
                <Step>
                  <StepNumber>3.</StepNumber>
                  <StepBody>
                    Демонтировать аккумулятор
                    <BulletList
                      items={[
                        { text: "Отсоединить плюсовую клемму от положительного полюса аккумулятора.", dashes: ["Открутить гайку"] },
                        { text: "Демонтировать держатель", dashes: ["Выкрутить винт"] },
                      ]}
                    />
                  </StepBody>
                </Step>
                <FigureStep>
                  <StepNumber>4.</StepNumber>
                  <StepBody>
                    Снять аккумуляторную полку (1)
                    <BulletList
                      items={[
                        { text: "В 2-х местах освободить от зажимов шланг охлаждающей жидкости (3)" },
                        { text: "Демонтировать жгут проводов (4) с аккумуляторной полки", dashes: ["Отсоединить 2 кабельных хомута"] },
                        { text: "Отвинтить 3 винта (2)" },
                      ]}
                    />
                  </StepBody>
                  <Figure>
                    <FigureTools>
                      {figureTools.map((tool) => (
                        <FigureTool key={tool.name} aria-label={tool.name}>{tool.icon}</FigureTool>
                      ))}
                    </FigureTools>
                    <FigureCanvas><TrayDrawing /></FigureCanvas>
                  </Figure>
                </FigureStep>
                <Step>
                  <StepNumber>5.</StepNumber>
                  <StepBody>Поднять автомобиль на полную высоту</StepBody>
                </Step>
                <Step>
                  <StepNumber>6.</StepNumber>
                  <StepBody>Снять нижнюю крышку моторного отсека, смотри Снятие</StepBody>
                </Step>
              </Steps>
            </Page>
            <ScrollBar>
              <ScrollButton aria-label="Вверх">
                <Art box="0 0 21 12" crisp><path d="M10 0L21 12H0Z" fill="#000" /></Art>
              </ScrollButton>
              <ScrollThumb />
              <Spacer />
              <ScrollButton aria-label="Вниз">
                <Art box="0 0 21 12" crisp><path d="M10 12L21 0H0Z" fill="#000" /></Art>
              </ScrollButton>
            </ScrollBar>
          </DocumentPane>

          <NavBar>
            <Counter>Документ1/1</Counter>
            <Spacer />
            <NavButtons>
              {navigation.map((item) => (
                <NavButton key={item.label} $disabled={item.disabled} $lead={item.lead}>
                  <NavIcon>{item.icon}</NavIcon>
                  {item.label}
                </NavButton>
              ))}
            </NavButtons>
          </NavBar>
        </FrameInner>
      </Frame>

      <StatusBar>
        <StatusText>Готово</StatusText>
        <StatusCell $width={32}>TIS</StatusCell>
        <StatusCell $width={46}>OPEL</StatusCell>
        <StatusCell $width={196}>Opel, ASTRA-H, 2007, Z 16 XER, 5-MT</StatusCell>
        <StatusLed>
          <LedIcon />
          <GripIcon />
        </StatusLed>
      </StatusBar>

      <TaskBar>
        <StartButton>
          <StartFlag />
          Пуск
        </StartButton>
        <TaskButton>
          <AppIcon />
          TIS 2000 - Информац...
        </TaskButton>
        <Spacer />
        <Tray>
          <ShieldIcon />
          <SpeakerIcon />
          <CubeIcon />
          <Clock>11:40</Clock>
        </Tray>
      </TaskBar>
    </Shell>
  );
}
